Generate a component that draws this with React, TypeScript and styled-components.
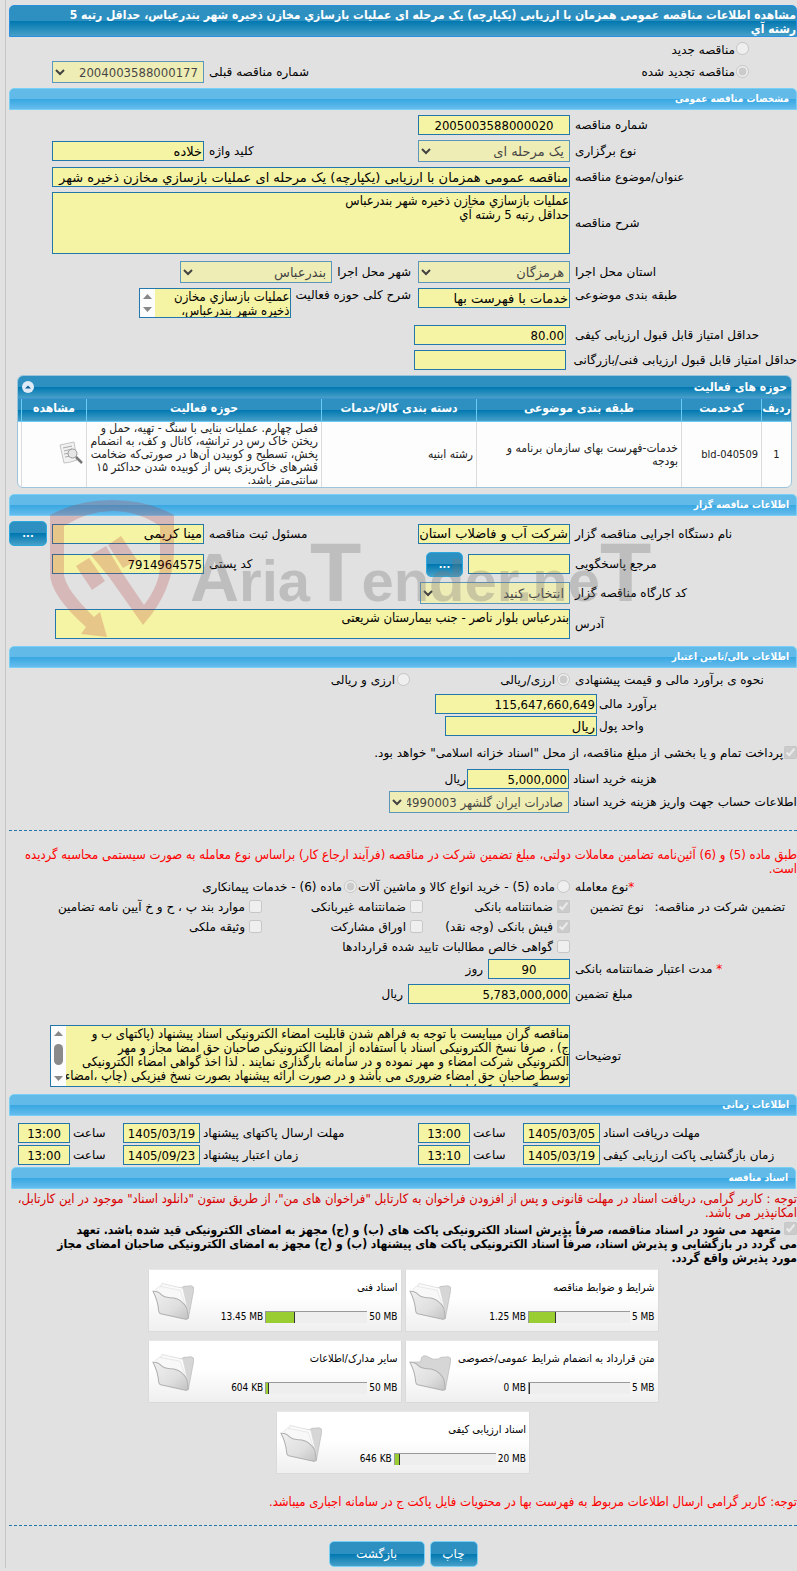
import React from "react";
import styled, { createGlobalStyle, css } from "styled-components";

const wide = `"DejaVu Sans", sans-serif`;
const narrow = `"DejaVu Sans Condensed", "DejaVu Sans", sans-serif`;

const GlobalStyle = createGlobalStyle`
  *, *::before, *::after { box-sizing: border-box; }
  body {
    margin: 0;
    background: #e1e1e1;
    color: #000;
    font-family: ${narrow};
    font-size: 12px;
    line-height: 14px;
  }
  input, select, textarea, button { font-family: inherit; }
`;

const edge = "#2477ab";
const deep = "linear-gradient(#2e90c0 0 50%, #0077b0 50%, #47a0c8)";
const sky = "linear-gradient(#62bae9 0 50%, #37a7e2 50%, #66bcec)";

const Page = styled.main`
  direction: rtl;
  margin-left: 5px;
  padding: 5px 0 1px 3px;
  border-left: 1px solid #c6c6c6;
  overflow: hidden;
`;

const Title = styled.h1`
  margin: 0;
  min-height: 32px;
  padding: 2px 0 0 24px;
  border: 1px solid #2b8fdd;
  border-radius: 5px 5px 0 0;
  background: ${deep};
  color: #fff;
  font-size: 12px;
  line-height: 14px;
`;

const Heading = styled.h2<{ $inset?: boolean }>`
  margin: 0 ${(p) => (p.$inset ? "1px 0 2px" : "0")};
  height: 22px;
  padding: 0 7px;
  border: 1px solid #79d0f6;
  border-radius: 5px 5px 0 0;
  background: ${sky};
  color: #fff;
  font-size: 10px;
  line-height: 20px;
`;

const Rows = styled.div<{ $top?: number; $bottom?: number; $gap?: number }>`
  display: flex;
  flex-direction: column;
  gap: ${(p) => p.$gap ?? 5}px;
  padding-top: ${(p) => p.$top ?? 5}px;
  padding-bottom: ${(p) => p.$bottom ?? 5}px;
`;

const Row = styled.div<{ $h?: number; $end?: number; $gap?: number; $align?: string }>`
  display: flex;
  align-items: ${(p) => p.$align ?? "center"};
  gap: ${(p) => p.$gap ?? 5}px;
  min-height: ${(p) => p.$h ?? 20}px;
  padding-left: ${(p) => p.$end ?? 43}px;
`;

const labelText = css`
  font-family: ${wide};
  font-size: 12px;
  line-height: 14px;
  white-space: nowrap;
`;

const Label = styled.label<{ $w?: number }>`
  ${labelText}
  flex: none;
  width: ${(p) => p.$w ?? 222}px;
  text-align: left;
`;

const SideLabel = styled.label`
  ${labelText}
  flex: 1;
  text-align: left;
`;

const NearLabel = styled.label`
  ${labelText}
  padding-right: 2px;
`;

const FeeLabel = styled.label`
  ${labelText}
  flex: none;
  width: 227px;
  padding-left: 3px;
  text-align: left;
`;

const Unit = styled.span`
  ${labelText}
`;

const Star = styled.span`
  color: #f00;
`;

const box = css`
  border: 1px solid ${edge};
  border-radius: 0;
  background: #f5f3a4;
  color: #000;
  outline: 0;
`;

const Field = styled.input<{ $w?: number; $center?: boolean; $num?: boolean }>`
  ${box}
  ${(p) => (p.$w ? `flex: none; width: ${p.$w}px;` : "flex: 1; min-width: 0;")}
  height: 20px;
  padding: 1px;
  font-family: ${(p) => (p.$num || p.$center ? narrow : wide)};
  font-size: 13px;
  text-align: ${(p) => (p.$center ? "center" : "right")};
`;

const Select = styled.select<{ $w: number; $num?: boolean }>`
  ${box}
  flex: none;
  width: ${(p) => p.$w}px;
  height: 22px;
  padding: 0 1px;
  font-family: ${(p) => (p.$num ? narrow : wide)};
  font-size: 13px;
`;

const AreaFrame = styled.div<{ $w?: number; $h: number }>`
  ${box}
  display: flex;
  ${(p) => (p.$w ? `flex: none; width: ${p.$w}px;` : "flex: 1; min-width: 0;")}
  height: ${(p) => p.$h}px;
`;

const Area = styled.textarea`
  flex: 1;
  min-width: 0;
  padding: 1px 0 0;
  border: 0;
  outline: 0;
  resize: none;
  overflow: hidden;
  background: transparent;
  color: #000;
  font-size: 13px;
  line-height: 14px;
  white-space: pre;
`;

const ScrollRail = styled.svg`
  flex: none;
  width: 15px;
  height: 100%;
  background: #fcfcfc;
`;

const Option = styled.label<{ $w?: number; $gap?: number }>`
  ${labelText}
  display: flex;
  align-items: center;
  flex: none;
  gap: ${(p) => p.$gap ?? 2}px;
  ${(p) => p.$w && `width: ${p.$w}px;`}
`;

const Tick = styled.input`
  flex: none;
  width: 13px;
  height: 13px;
  margin: 0 0 2px;
`;

const Button = styled.button<{ $w: number; $small?: boolean }>`
  flex: none;
  width: ${(p) => p.$w}px;
  height: ${(p) => (p.$small ? 25 : 26)}px;
  padding: 0;
  border: 1px solid ${(p) => (p.$small ? "#2ba9de" : "#79d0f6")};
  border-radius: 5px;
  background: ${deep};
  color: #fff;
  font-family: ${wide};
  font-size: ${(p) => (p.$small ? 10 : 12)}px;
  font-weight: ${(p) => (p.$small ? 700 : 400)};
`;

const Panel = styled.section`
  margin: 0 5px 6px 8px;
  border: 1px solid #9cc5dc;
  border-radius: 6px;
  overflow: hidden;
  background: #fdfdfd;
`;

const PanelHead = styled.header`
  display: flex;
  align-items: center;
  justify-content: space-between;
  height: 23px;
  padding: 0 4px;
  border-bottom: 1px solid #3d93cf;
  background: ${deep};
`;

const PanelTitle = styled.h3`
  margin: 0;
  color: #fff;
  font-size: 12px;
`;

const Collapse = styled.button`
  display: flex;
  width: 12px;
  height: 12px;
  padding: 0;
  border: 0;
  border-radius: 50%;
  background: #dfeaf7;
`;

const Grid = styled.table`
  width: 100%;
  table-layout: fixed;
  border-collapse: separate;
  border-spacing: 0;
  font-size: 12px;
  line-height: 13px;
`;

const Th = styled.th<{ $w?: number }>`
  ${(p) => p.$w && `width: ${p.$w}px;`}
  height: 23px;
  padding: 0 0 4px;
  border-left: 1px solid #6ccbf3;
  border-bottom: 1px solid #6ccbf3;
  background: ${deep};
  color: #fff;
  font-size: 12px;
  white-space: nowrap;
`;

const Td = styled.td<{ $center?: boolean; $num?: boolean }>`
  height: 65px;
  padding: 0 3px;
  border-left: 1px solid #dcdcdc;
  color: #222;
  text-align: ${(p) => (p.$center ? "center" : "right")};
  white-space: nowrap;
  ${(p) => p.$num && "font-size: 11px;"}
`;

const EdgeTh = styled(Th)`
  border-left: 0;
`;
const EdgeTd = styled(Td)`
  padding: 0;
  border-left: 0;
`;

const ViewButton = styled.button`
  display: block;
  margin: 0 0 0 auto;
  padding: 0;
  border: 0;
  background: none;
`;

const Holder = styled.section`
  position: relative;
`;

const Watermark = styled.svg`
  position: absolute;
  top: 4px;
  left: 40px;
  width: 620px;
  height: 150px;
  pointer-events: none;
`;

const Divider = styled.hr`
  margin: 0;
  border: 0;
  border-top: 1px dashed ${edge};
`;

const Warning = styled.p<{ $shade?: string; $top?: number; $bottom?: number }>`
  margin: ${(p) => p.$top ?? 0}px 0 ${(p) => p.$bottom ?? 0}px;
  color: ${(p) => p.$shade ?? "#f00"};
  font-size: 13px;
  line-height: 14px;
`;

const Pledge = styled.label`
  display: block;
  margin-bottom: 4px;
  padding-top: 2px;
  font-size: 12px;
  font-weight: 700;
  line-height: 14px;

  input { margin-left: 3px; vertical-align: -1px; }
`;

const GuaranteeHead = styled.div`
  ${labelText}
  display: flex;
  justify-content: space-between;
  flex: none;
  width: 222px;
  padding: 0 12px 0 15px;
`;

const TimeCell = styled.div<{ $label: number }>`
  display: flex;
  align-items: center;
  gap: 3px;
  flex: none;

  & > label:first-child { width: ${(p) => p.$label}px; text-align: left; }
  & > label:nth-of-type(2) { width: 47px; text-align: left; }
`;

const Cards = styled.div`
  display: flex;
  flex-wrap: wrap;
  justify-content: center;
  gap: 8px 3px;
  max-width: 520px;
  margin: 0 auto;
`;

const Card = styled.article`
  display: flex;
  gap: 4px;
  width: 254px;
  height: 63px;
  padding: 12px 3px 8px;
  border: 1px solid #dadada;
  border-top-color: #e8e8e8;
  background: linear-gradient(#fff 45%, #efefef);
`;

const CardBody = styled.div`
  display: flex;
  flex-direction: column;
  justify-content: space-between;
  flex: 1;
`;

const CardName = styled.h4`
  margin: 0;
  font-size: 11px;
  font-weight: 400;
  line-height: 12px;
  white-space: nowrap;
`;

const Usage = styled.div`
  display: flex;
  align-items: center;
  gap: 2px;
  font-size: 10px;
  line-height: 12px;
  white-space: nowrap;
`;

const Track = styled.div`
  direction: ltr;
  width: 102px;
  height: 12px;
  border-top: 1px solid #999;
  border-left: 1px solid #999;
  background: #eee;
`;

const Fill = styled.div`
  height: 100%;
  border-right: 1px solid #333;
  background: #9acd32;
`;

const Actions = styled.footer`
  display: flex;
  justify-content: center;
  gap: 5px;
  padding-top: 15px;
`;

function Rail({ thumb }: { thumb?: boolean }) {
  const h = thumb ? 60 : 28;
  return (
    <ScrollRail viewBox={`0 0 15 ${h}`} aria-hidden="true">
      <path d="M3 10 7.500 5 12 10z" fill="#888" />
      {thumb && <rect x="3" y="18" width="9" height="21" rx="4.500" fill="#8a8a8a" />}
      <path d={`M3 ${h - 10} 7.500 ${h - 5} 12 ${h - 10}z`} fill="#888" />
    </ScrollRail>
  );
}

function Folder({ empty }: { empty?: boolean }) {
  return (
    <svg width="42" height="38" viewBox="0 0 125 112" aria-hidden="true">
      <defs>
        <linearGradient id="front" x1="0" y1="0" x2="1" y2="1">
          <stop offset="0" stopColor="#f0f0f0" />
          <stop offset=".6" stopColor="#dfdfdf" />
          <stop offset="1" stopColor="#c2c2c2" />
        </linearGradient>
      </defs>
      <path
        d={
          empty
            ? "M3 27 34 26 38 12Q42 6 50 8L72 18 88 17Q94 10 104 12Q118 8 123 14L124 24 108 108Z"
            : "M70 18 88 17Q94 10 104 12Q118 8 123 14L124 24 108 108Z"
        }
        fill="#d6d6d6"
        stroke="#b8b8b8"
        strokeWidth="2"
      />
      {!empty && (
        <>
          <path d="M22 18 30 4 92 18 108 88 60 80Z" fill="#fbfbfb" stroke="#d4d4d4" strokeWidth="2" />
          <path d="M10 22 22 12 84 24 102 76 50 66Z" fill="#f8f8f8" stroke="#e0e0e0" strokeWidth="2" />
        </>
      )}
      <path
        d="M3 27Q14 26 22 32Q34 46 54 46Q78 46 90 60Q104 72 105 84L108 106Q106 111 100 110L26 94Q21 92 20 86Q18 56 3 27Z"
        fill="url(#front)"
        stroke="#b0b0b0"
        strokeWidth="3"
      />
    </svg>
  );
}

const cards = [
  { name: "شرایط و ضوابط مناقصه", max: "5 MB", used: "1.25 MB", share: 27 },
  { name: "اسناد فنی", max: "50 MB", used: "13.45 MB", share: 28 },
  { name: "متن قرارداد به انضمام شرایط عمومی/خصوصی", max: "5 MB", used: "0 MB", share: 1 },
  { name: "سایر مدارک/اطلاعات", max: "50 MB", used: "604 KB", share: 3 },
  { name: "اسناد ارزیابی کیفی", max: "20 MB", used: "646 KB", share: 5 },
];

function Time({ id, name, date, hour, width }: { id: string; name: string; date: string; hour: string; width: number }) {
  return (
    <TimeCell $label={width}>
      <Unit as="label" htmlFor={`${id}-d`}>{name}</Unit>
      <Field id={`${id}-d`} $w={77} $center readOnly value={date} />
      <Unit as="label" htmlFor={`${id}-h`}>ساعت</Unit>
      <Field id={`${id}-h`} $w={52} $center readOnly value={hour} />
    </TimeCell>
  );
}

export default function App() {
  return (
    <Page>
      <GlobalStyle />
      <Title>
        مشاهده اطلاعات مناقصه عمومی همزمان با ارزیابی (یکپارچه) یک مرحله ای عملیات بازسازي مخازن ذخیره شهر بندرعباس، حداقل رتبه 5<br />رشته آي
      </Title>

      <Rows $top={1} $gap={0}>
        <Row $h={23}>
          <Label as="span" $w={43} />
          <Option $gap={1}><Tick type="radio" name="kind" disabled />مناقصه جدید</Option>
        </Row>
        <Row $h={22}>
          <Label as="span" $w={43} />
          <Option $gap={1}><Tick type="radio" name="kind" disabled defaultChecked />مناقصه تجدید شده</Option>
          <SideLabel htmlFor="prev">شماره مناقصه قبلی</SideLabel>
          <Select id="prev" $w={152} $num disabled><option>2004003588000177</option></Select>
        </Row>
      </Rows>

      <Heading>مشخصات مناقصه عمومی</Heading>
      <Rows>
        <Row>
          <Label htmlFor="no">شماره مناقصه</Label>
          <Field id="no" $w={152} $center readOnly value="2005003588000020" />
        </Row>
        <Row $h={22}>
          <Label htmlFor="type">نوع برگزاری</Label>
          <Select id="type" $w={152} disabled><option>یک مرحله ای</option></Select>
          <SideLabel htmlFor="key">کلید واژه</SideLabel>
          <Field id="key" $w={152} readOnly value="خلاده" />
        </Row>
        <Row>
          <Label htmlFor="subject">عنوان/موضوع مناقصه</Label>
          <Field id="subject" readOnly value="مناقصه عمومی همزمان با ارزیابی (یکپارچه) یک مرحله ای عملیات بازسازي مخازن ذخیره شهر" />
        </Row>
        <Row>
          <Label htmlFor="desc">شرح مناقصه</Label>
          <AreaFrame $h={62}>
            <Area id="desc" readOnly value={"عملیات بازسازي مخازن ذخیره شهر بندرعباس\nحداقل رتبه 5 رشته آي"} />
          </AreaFrame>
        </Row>
      </Rows>
      <Rows $top={2}>
        <Row $h={22}>
          <Label htmlFor="province">استان محل اجرا</Label>
          <Select id="province" $w={152} disabled><option>هرمزگان</option></Select>
          <NearLabel htmlFor="city">شهر محل اجرا</NearLabel>
          <Select id="city" $w={152} disabled><option>بندرعباس</option></Select>
        </Row>
        <Row $align="flex-start">
          <Label htmlFor="cat">طبقه بندی موضوعی</Label>
          <Field id="cat" $w={152} readOnly value="خدمات با فهرست بها" />
          <NearLabel htmlFor="scope">شرح کلی حوزه فعالیت</NearLabel>
          <AreaFrame $w={152} $h={30}>
            <Area id="scope" readOnly value={"عملیات بازسازي مخازن\nذخیره شهر بندرعباس،"} />
            <Rail />
          </AreaFrame>
        </Row>
      </Rows>
      <Rows $top={2}>
        <Row $gap={9}>
          <Label htmlFor="q">حداقل امتیاز قابل قبول ارزیابی کیفی</Label>
          <Field id="q" $w={152} $num readOnly value="80.00" />
        </Row>
        <Row $gap={9}>
          <Label htmlFor="t">حداقل امتیاز قابل قبول ارزیابی فنی/بازرگانی</Label>
          <Field id="t" $w={152} $num readOnly value="" />
        </Row>
      </Rows>

      <Panel>
        <PanelHead>
          <PanelTitle>حوزه های فعالیت</PanelTitle>
          <Collapse aria-label="بستن">
            <svg width="12" height="12" viewBox="0 0 12 12"><path d="M3 7.500 6 4.500 9 7.500z" fill="#0d5e96" /></svg>
          </Collapse>
        </PanelHead>
        <Grid>
          <thead>
            <tr>
              <Th $w={30}>ردیف</Th>
              <Th $w={80}>کدخدمت</Th>
              <Th $w={205}>طبقه بندی موضوعی</Th>
              <Th $w={155}>دسته بندی کالا/خدمات</Th>
              <Th>حوزه فعالیت</Th>
              <Th $w={65}>مشاهده</Th>
              <EdgeTh $w={3} />
            </tr>
          </thead>
          <tbody>
            <tr>
              <Td $center $num>1</Td>
              <Td $num><bdi>bld-040509</bdi></Td>
              <Td>خدمات-فهرست بهای سازمان برنامه و<br />بودجه</Td>
              <Td>رشته ابنیه</Td>
              <Td>
                فصل چهارم. عملیات بنایی با سنگ - تهیه، حمل و<br />
                ریختن خاک رس در ترانشه، کانال و کف، به انضمام<br />
                پخش، تسطیح و کوبیدن آن‌ها در صورتی‌که ضخامت<br />
                قشرهای خاک‌ریزی پس از کوبیده شدن حداکثر ۱۵<br />
                سانتی‌متر باشد.
              </Td>
              <Td>
                <ViewButton aria-label="مشاهده">
                  <svg width="24" height="24" viewBox="0 0 24 24">
                    <path d="M1 4 15 1 18 19Q10 22 5 22Z" fill="#f1f1f1" stroke="#c4c4c4" />
                    <path d="M4 7 13 5M5 10 13 8M5 13 11 12M6 16 12 15" stroke="#aaa" />
                    <circle cx="13.500" cy="12.500" r="4.500" fill="#e6e6e6" stroke="#999" />
                    <path d="M17 16 23 22" stroke="#777" strokeWidth="2.500" />
                  </svg>
                </ViewButton>
              </Td>
              <EdgeTd />
            </tr>
          </tbody>
        </Grid>
      </Panel>

      <Holder>
        <Heading>اطلاعات مناقصه گزار</Heading>
        <Rows $bottom={7}>
          <Row $h={25} $end={0}>
            <Label htmlFor="org">نام دستگاه اجرایی مناقصه گزار</Label>
            <Field id="org" $w={152} readOnly value="شرکت آب و فاضلاب استان" />
            <SideLabel htmlFor="reg">مسئول ثبت مناقصه</SideLabel>
            <Field id="reg" $w={152} readOnly value="مینا کریمی" />
            <Button $w={38} $small>...</Button>
          </Row>
          <Row $h={26}>
            <Label htmlFor="ref">مرجع پاسخگویی</Label>
            <Field id="ref" $w={102} readOnly value="" />
            <Button $w={37} $small>...</Button>
            <SideLabel htmlFor="post">کد پستی</SideLabel>
            <Field id="post" $w={152} $num readOnly value="7914964575" />
          </Row>
          <Row $h={22}>
            <Label htmlFor="shop">کد کارگاه مناقصه گزار</Label>
            <Select id="shop" $w={150} disabled><option>انتخاب کنید</option></Select>
          </Row>
          <Row $end={46}>
            <Label htmlFor="addr">آدرس</Label>
            <AreaFrame $h={30}>
              <Area id="addr" readOnly value="بندرعباس بلوار ناصر - جنب بیمارستان شریعتی" />
            </AreaFrame>
          </Row>
        </Rows>
        <Watermark viewBox="49 498 620 150" aria-hidden="true">
          <g fill="#b52b2b" fillOpacity=".22">
            <path d="M50 515Q78 500 112 500Q147 500 174 515V550Q174 590 143 625L109 577 121 571 144 605Q160 584 160 565V526Q138 511 112 511Q88 511 64 526V575Q66 590 94 617L100 612 107 637 81 634 86 627Q50 595 50 573Z" />
            <path d="M76 566 89 558 105 581 92 590Z" />
            <path d="M91 555 106 546 121 571 109 577Z" />
            <path d="M108 545 121 536 137 560 123 568Z" />
          </g>
          <text
            x="190"
            y="601"
            direction="ltr"
            fontFamily="'Liberation Sans', sans-serif"
            fontWeight="700"
            fontSize="58"
            fill="#777"
            fillOpacity=".32"
          >
            <tspan fontSize="68">A</tspan>ria<tspan fontSize="84">T</tspan>ender.ne<tspan fontSize="84">T</tspan>
          </text>
        </Watermark>
      </Holder>

      <Heading>اطلاعات مالی/تامین اعتبار</Heading>
      <Rows $top={0} $bottom={0} $gap={2}>
        <Row $h={24}>
          <Label as="span">نحوه ی برآورد مالی و قیمت پیشنهادی</Label>
          <Option $w={155}><Tick type="radio" name="cur" disabled defaultChecked />ارزی/ریالی</Option>
          <Option><Tick type="radio" name="cur" disabled />ارزی و ریالی</Option>
        </Row>
        <Row $gap={2}>
          <Label $w={198} htmlFor="est">برآورد مالی</Label>
          <Field id="est" $w={162} $num readOnly value="115,647,660,649" />
        </Row>
        <Row $gap={2}>
          <Label $w={198} htmlFor="unit">واحد پول</Label>
          <Field id="unit" $w={152} readOnly value="ریال" />
        </Row>
      </Rows>
      <Rows $top={6} $bottom={0}>
        <Row $h={22}>
          <Option $gap={1}>
            <Tick type="checkbox" disabled defaultChecked />
            پرداخت تمام و یا بخشی از مبلغ مناقصه، از محل "اسناد خزانه اسلامی" خواهد بود.
          </Option>
        </Row>
        <Row $gap={1}>
          <FeeLabel htmlFor="fee">هزینه خرید اسناد</FeeLabel>
          <Field id="fee" $w={102} $num readOnly value="5,000,000" />
          <Unit>ریال</Unit>
        </Row>
      </Rows>
      <Rows $top={2} $bottom={17}>
        <Row $h={22} $gap={1}>
          <FeeLabel htmlFor="acc">اطلاعات حساب جهت واریز هزینه خرید اسناد</FeeLabel>
          <Select id="acc" $w={180} $num disabled><option>صادرات ایران گلشهر 34990003</option></Select>
        </Row>
      </Rows>
      <Divider />

      <Warning $top={17} $bottom={1}>
        طبق ماده (5) و (6) آئین‌نامه تضامین معاملات دولتی، مبلغ تضمین شرکت در مناقصه (فرآیند ارجاع کار) براساس نوع معامله به صورت سیستمی محاسبه گردیده است.
      </Warning>
      <Rows $top={0} $bottom={0} $gap={0}>
        <Row>
          <Label as="span"><Star>*</Star>نوع معامله</Label>
          <Option $w={208}><Tick type="radio" name="deal" disabled />ماده (5) - خرید انواع کالا و ماشین آلات</Option>
          <Option><Tick type="radio" name="deal" disabled defaultChecked />ماده (6) - خدمات پیمانکاری</Option>
        </Row>
        <Row $end={0}>
          <GuaranteeHead><span>تضمین شرکت در مناقصه:</span><span>نوع تضمین</span></GuaranteeHead>
          <Option $w={142} $gap={4}><Tick type="checkbox" disabled defaultChecked />ضمانتنامه بانکی</Option>
          <Option $w={156} $gap={4}><Tick type="checkbox" disabled />ضمانتنامه غیربانکی</Option>
          <Option $gap={4}><Tick type="checkbox" disabled />موارد بند پ ، ح و خ آیین نامه تضامین</Option>
        </Row>
        <Row $end={0}>
          <GuaranteeHead />
          <Option $w={142} $gap={4}><Tick type="checkbox" disabled defaultChecked />فیش بانکی (وجه نقد)</Option>
          <Option $w={156} $gap={4}><Tick type="checkbox" disabled />اوراق مشارکت</Option>
          <Option $gap={4}><Tick type="checkbox" disabled />وثیقه ملکی</Option>
        </Row>
        <Row>
          <GuaranteeHead />
          <Option $gap={4}><Tick type="checkbox" disabled />گواهی خالص مطالبات تایید شده قراردادها</Option>
        </Row>
      </Rows>
      <Rows $top={2} $bottom={21}>
        <Row>
          <Label htmlFor="days"><Star>*</Star> مدت اعتبار ضمانتنامه بانکی</Label>
          <Field id="days" $w={82} $center readOnly value="90" />
          <Unit>روز</Unit>
        </Row>
        <Row>
          <Label htmlFor="amount">مبلغ تضمین</Label>
          <Field id="amount" $w={162} $num readOnly value="5,783,000,000" />
          <Unit>ریال</Unit>
        </Row>
      </Rows>
      <Rows $top={0} $bottom={7}>
        <Row $end={41}>
          <Label htmlFor="notes">توضیحات</Label>
          <AreaFrame $h={62}>
            <Area
              id="notes"
              readOnly
              value={
                "مناقصه گران میبایست با توجه به فراهم شدن قابلیت امضاء الکترونیکی اسناد پیشنهاد (پاکتهای ب و\nج) ، صرفا نسخ الکترونیکی اسناد با استفاده از امضا الکترونیکی صاحبان حق امضا مجاز و مهر\nالکترونیکی شرکت امضاء و مهر نموده و در سامانه بارگذاری نمایند . لذا اخذ گواهی امضاء الکترونیکی\nتوسط صاحبان حق امضاء ضروری می باشد و در صورت ارائه پیشنهاد بصورت نسخ فیزیکی (چاپ ،امضاء\nو مهر گرم و اسکن) اسناد"
              }
            />
            <Rail thumb />
          </AreaFrame>
        </Row>
      </Rows>

      <Heading>اطلاعات زمانی</Heading>
      <Rows $top={7} $bottom={2} $gap={2}>
        <Row $end={9} $gap={20}>
          <Time id="recv" width={194} name="مهلت دریافت اسناد" date="1405/03/05" hour="13:00" />
          <Time id="send" width={195} name="مهلت ارسال پاکتهای پیشنهاد" date="1405/03/19" hour="13:00" />
        </Row>
        <Row $end={9} $gap={20}>
          <Time id="open" width={194} name="زمان بازگشایی پاکت ارزیابی کیفی" date="1405/03/19" hour="13:10" />
          <Time id="valid" width={195} name="زمان اعتبار پیشنهاد" date="1405/09/23" hour="13:00" />
        </Row>
      </Rows>

      <Heading $inset>اسناد مناقصه</Heading>
      <Warning $shade="#d90000" $top={3}>
        توجه : کاربر گرامی، دریافت اسناد در مهلت قانونی و پس از افزودن فراخوان به کارتابل "فراخوان های من"، از طریق ستون "دانلود اسناد" موجود در این کارتابل، امکانپذیر می باشد.
      </Warning>
      <Pledge>
        <Tick type="checkbox" disabled defaultChecked />
        متعهد می شود در اسناد مناقصه، صرفاً پذیرش اسناد الکترونیکی پاکت های (ب) و (ج) مجهز به امضای الکترونیکی قید شده باشد. تعهد<br />
        می گردد در بازگشایی و پذیرش اسناد، صرفاً اسناد الکترونیکی پاکت های پیشنهاد (ب) و (ج) مجهز به امضای الکترونیکی صاحبان امضای مجاز<br />
        مورد پذیرش واقع گردد.
      </Pledge>

      <Cards>
        {cards.map((c) => (
          <Card key={c.name}>
            <CardBody>
              <CardName>{c.name}</CardName>
              <Usage>
                <bdi>{c.max}</bdi>
                <Track><Fill style={{ width: `${c.share}%` }} /></Track>
                <bdi>{c.used}</bdi>
              </Usage>
            </CardBody>
            <Folder empty={c.used === "0 MB"} />
          </Card>
        ))}
      </Cards>

      <Warning $top={21} $bottom={16}>
        توجه: کاربر گرامی ارسال اطلاعات مربوط به فهرست بها در محتویات فایل پاکت ج در سامانه اجباری میباشد.
      </Warning>
      <Divider />
      <Actions>
        <Button $w={48}>چاپ</Button>
        <Button $w={96}>بازگشت</Button>
      </Actions>
    </Page>
  );
}
